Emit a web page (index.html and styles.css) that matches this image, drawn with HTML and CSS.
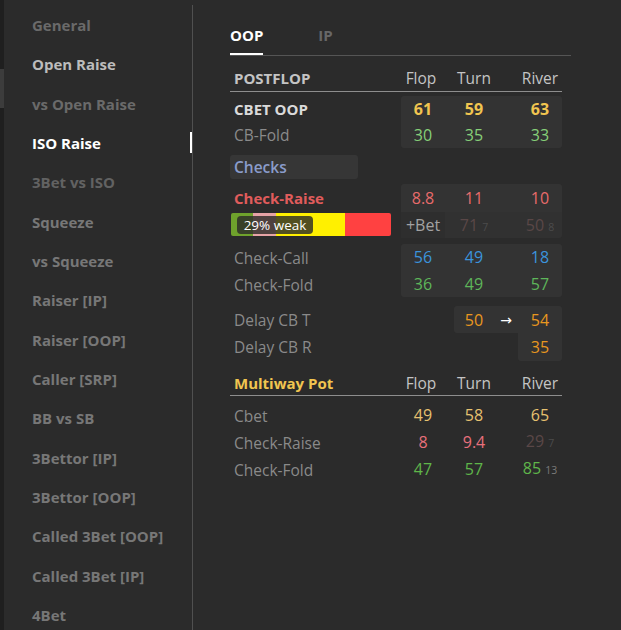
FILE: index.html
```html
<!DOCTYPE html>
<html>
<head>
<meta charset="utf-8">
<link rel="stylesheet" href="styles.css">
</head>
<body>
<div class="app">
  <div class="rail"><div class="thumb"></div></div>
  <nav class="sidebar">
    <div class="nav-item dim">General</div>
    <div class="nav-item light">Open Raise</div>
    <div class="nav-item dim">vs Open Raise</div>
    <div class="nav-item active">ISO Raise</div>
    <div class="nav-item dimmer">3Bet vs ISO</div>
    <div class="nav-item">Squeeze</div>
    <div class="nav-item">vs Squeeze</div>
    <div class="nav-item">Raiser [IP]</div>
    <div class="nav-item">Raiser [OOP]</div>
    <div class="nav-item">Caller [SRP]</div>
    <div class="nav-item">BB vs SB</div>
    <div class="nav-item">3Bettor [IP]</div>
    <div class="nav-item">3Bettor [OOP]</div>
    <div class="nav-item">Called 3Bet [OOP]</div>
    <div class="nav-item">Called 3Bet [IP]</div>
    <div class="nav-item">4Bet</div>
  </nav>
  <main class="main">
    <div class="tabs">
      <div class="tab tab-active">OOP</div>
      <div class="tab">IP</div>
    </div>
    <div class="table">
      <div class="head">
        <div class="lbl-head">POSTFLOP</div>
        <div class="c-flop">Flop</div>
        <div class="c-turn">Turn</div>
        <div class="c-gap"></div>
        <div class="c-river">River</div>
      </div>

      <div class="group g-cbet">
        <div class="labels">
          <div class="lrow bold-w">CBET OOP</div>
          <div class="lrow">CB-Fold</div>
        </div>
        <div class="vals box">
          <div class="vrow gold bold"><span class="c-flop">61</span><span class="c-turn">59</span><span class="c-gap"></span><span class="c-river">63</span></div>
          <div class="vrow lgreen"><span class="c-flop">30</span><span class="c-turn">35</span><span class="c-gap"></span><span class="c-river">33</span></div>
        </div>
      </div>

      <div class="checks">Checks</div>

      <div class="group g-cr">
        <div class="labels">
          <div class="lrow cr-label">Check-Raise</div>
          <div class="lrow bar-row">
            <div class="bar">
              <span class="seg seg-green" style="width:22px"></span>
              <span class="seg seg-pink" style="width:23px"></span>
              <span class="seg seg-yellow" style="width:69px"></span>
              <span class="seg seg-red" style="width:46px"></span>
              <span class="bar-label">29% weak</span>
            </div>
          </div>
        </div>
        <div class="vals">
          <div class="vrow cr-top red"><span class="c-flop">8.8</span><span class="c-turn">11</span><span class="c-gap"></span><span class="c-river">10</span></div>
          <div class="vrow cr-bot">
            <span class="c-flop betcell">+Bet</span>
            <span class="rest">
              <span class="c-turn faded">71<sub>7</sub></span><span class="c-gap"></span><span class="c-river faded">50<sub>8</sub></span>
            </span>
          </div>
        </div>
      </div>

      <div class="group g-cc">
        <div class="labels">
          <div class="lrow">Check-Call</div>
          <div class="lrow">Check-Fold</div>
        </div>
        <div class="vals box">
          <div class="vrow blue"><span class="c-flop">56</span><span class="c-turn">49</span><span class="c-gap"></span><span class="c-river">18</span></div>
          <div class="vrow green"><span class="c-flop">36</span><span class="c-turn">49</span><span class="c-gap"></span><span class="c-river">57</span></div>
        </div>
      </div>

      <div class="group g-delay">
        <div class="labels">
          <div class="lrow">Delay CB T</div>
          <div class="lrow">Delay CB R</div>
        </div>
        <div class="vals">
          <div class="delay-top orange"><span class="d-turn">50</span><span class="d-arrow">→</span><span class="c-river">54</span></div>
          <div class="delay-bot orange"><span class="c-river">35</span></div>
        </div>
      </div>

      <div class="head mw-head">
        <div class="lbl-head mw-title">Multiway Pot</div>
        <div class="c-flop">Flop</div>
        <div class="c-turn">Turn</div>
        <div class="c-gap"></div>
        <div class="c-river">River</div>
      </div>

      <div class="group g-mw">
        <div class="labels">
          <div class="lrow">Cbet</div>
          <div class="lrow">Check-Raise</div>
          <div class="lrow">Check-Fold</div>
        </div>
        <div class="vals">
          <div class="vrow pale-gold"><span class="c-flop">49</span><span class="c-turn">58</span><span class="c-gap"></span><span class="c-river">65</span></div>
          <div class="vrow pink"><span class="c-flop">8</span><span class="c-turn">9.4</span><span class="c-gap"></span><span class="c-river faded">29<sub>7</sub></span></div>
          <div class="vrow mgreen"><span class="c-flop">47</span><span class="c-turn">57</span><span class="c-gap"></span><span class="c-river">85<sub class="sub-gray">13</sub></span></div>
        </div>
      </div>
    </div>
  </main>
</div>
</body>
</html>
```
FILE: styles.css
```css
* { box-sizing: border-box; }
html, body {
  margin: 0;
  padding: 0;
  background: #2b2b2b;
  height: 630px;
  overflow: hidden;
  font-family: "Open Sans", "Noto Sans", sans-serif;
}
.app {
  display: flex;
  height: 630px;
}
.rail {
  width: 4px;
  flex: none;
  background: #1f1f1f;
}
.thumb {
  margin-top: 69px;
  height: 39px;
  background: #3c3c3c;
}
.sidebar {
  width: 189px;
  flex: none;
  margin-top: 5px;
  border-right: 1px solid #505050;
}
.nav-item {
  position: relative;
  height: 39.33px;
  line-height: 40px;
  padding-left: 28px;
  font-size: 15px;
  font-weight: 700;
  color: #777777;
  white-space: nowrap;
}
.nav-item.dim { color: #6a6a6a; }
.nav-item.dimmer { color: #626262; }
.nav-item.light { color: #bcbcbc; }
.nav-item.active { color: #ffffff; }
.nav-item.active::after {
  content: "";
  position: absolute;
  right: 0;
  top: 9px;
  width: 2px;
  height: 21px;
  background: #ffffff;
}
.main {
  flex: 1;
  padding-left: 37px;
}
.tabs {
  display: flex;
  gap: 55px;
  width: 341px;
  padding-top: 23px;
  border-bottom: 1px solid #555555;
}
.tab {
  font-size: 15px;
  font-weight: 700;
  line-height: 24px;
  padding-bottom: 6px;
  border-bottom: 2px solid transparent;
  color: #676767;
}
.tab-active {
  color: #ffffff;
  border-bottom-color: #ffffff;
}
.table {
  width: 332px;
}
.head {
  display: flex;
  height: 36px;
  padding-top: 10px;
  line-height: 24px;
  font-size: 15.5px;
  color: #c4c4c4;
  border-bottom: 1px solid #8e8e8e;
}
.lbl-head {
  width: 171px;
  padding-left: 4px;
  font-weight: 700;
  font-size: 15px;
}
.mw-title { color: #f1c550; }
.c-flop { width: 44px; text-align: center; flex: none; }
.c-turn { width: 58px; text-align: center; flex: none; }
.c-gap { width: 15px; flex: none; }
.c-river { width: 44px; text-align: center; flex: none; }
.head .c-flop { padding-right: 4px; }

.group {
  display: flex;
  font-size: 15.5px;
}
.labels {
  width: 171px;
  flex: none;
  color: #8a8a8a;
}
.lrow {
  padding-left: 4px;
  white-space: nowrap;
}
.vals {
  width: 161px;
  flex: none;
  font-size: 16px;
}
.box {
  background: #333333;
  border-radius: 3px;
}
.vrow {
  display: flex;
  align-items: center;
}
sub {
  vertical-align: baseline;
  font-size: 10.5px;
  margin-left: 4px;
  color: #4c4c4c;
}
sub.sub-gray { color: #7a7a7a; }

.g-cbet { margin-top: 4px; }
.g-cbet .lrow, .g-cbet .vrow { height: 26px; line-height: 27px; }
.bold-w { color: #dadada; font-weight: 700; font-size: 15px; }
.bold { font-weight: 700; }
.gold { color: #f1c550; }
.lgreen { color: #86cf78; }

.checks {
  margin-top: 7px;
  width: 128px;
  height: 24px;
  line-height: 24px;
  padding-left: 4px;
  background: #363636;
  border-radius: 3px;
  color: #8a9ccb;
  font-weight: 600;
  font-size: 15.5px;
}

.g-cr { margin-top: 5px; }
.cr-label {
  height: 28px;
  line-height: 28px;
  color: #e05c5c;
  font-weight: 700;
  font-size: 15px;
}
.bar-row {
  height: 26px;
  padding: 1px 0 0 1px;
}
.bar {
  position: relative;
  display: flex;
  width: 160px;
  height: 23px;
  border-radius: 2px;
  overflow: hidden;
}
.seg { display: block; height: 100%; flex: none; }
.seg-green { background: #6fa22c; }
.seg-pink { background: #e6a3a6; }
.seg-yellow { background: #fff000; }
.seg-red { background: #ff4141; }
.bar-label {
  position: absolute;
  left: 6px;
  top: 3px;
  width: 76px;
  height: 18px;
  line-height: 18px;
  text-align: center;
  border-radius: 4px;
  background: rgba(44, 44, 40, 0.82);
  color: #ffffff;
  font-size: 13.5px;
}
.cr-top {
  height: 28px;
  line-height: 28px;
  background: #333333;
  border-radius: 3px 3px 0 0;
}
.red { color: #e86b6b; }
.cr-bot {
  height: 26px;
  line-height: 26px;
}
.betcell {
  background: #2e2e2e;
  color: #a2a2a2;
  height: 26px;
}
.rest {
  display: flex;
  height: 26px;
  background: #313131;
  border-radius: 0 0 3px 0;
}
.faded { color: #5a4747; }

.g-cc { margin-top: 6px; }
.g-cc .lrow, .g-cc .vrow { height: 26.5px; line-height: 28px; }
.blue { color: #3b93dc; }
.green { color: #5eb65a; }

.g-delay { margin-top: 9px; }
.g-delay .lrow { height: 27px; line-height: 29px; }
.delay-top {
  display: flex;
  margin-left: 53px;
  width: 108px;
  height: 27px;
  line-height: 28px;
  background: #333333;
  border-radius: 3px 3px 0 3px;
}
.d-turn { width: 40px; text-align: center; }
.d-arrow {
  width: 24px;
  text-align: center;
  color: #ffffff;
  font-family: "DejaVu Sans", sans-serif;
  font-size: 14px;
}
.delay-bot {
  margin-left: 117px;
  width: 44px;
  height: 28px;
  line-height: 29px;
  background: #333333;
  border-radius: 0 0 3px 3px;
  display: flex;
}
.orange { color: #e8971f; }

.mw-head { height: 35px; }
.g-mw { margin-top: 6px; }
.g-mw .lrow, .g-mw .vrow { height: 27px; line-height: 29px; }
.pale-gold { color: #e6c170; }
.pink { color: #e8707c; }
.mgreen { color: #5fb64a; }
```
